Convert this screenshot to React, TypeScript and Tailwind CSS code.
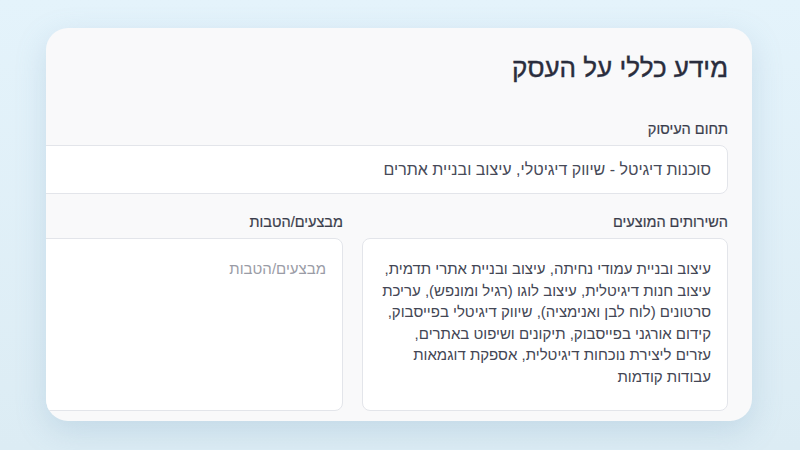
export default function App() {
  return (
    <div className="w-[800px] h-[450px] overflow-hidden bg-gradient-to-b from-[#e4f3fb] to-[#dcecf4] pt-[28px] pl-[46px] font-['Liberation_Sans',Arial,sans-serif]">
      <div
        dir="rtl"
        className="w-[706px] h-[393px] rounded-[22px] bg-[#f9f9fa] shadow-[0_10px_30px_rgba(120,160,190,0.25)] overflow-hidden pr-[24px] pt-[22px]"
      >
        <div className="w-[751px] shrink-0">
          <h1 className="text-[26px] leading-[36px] font-normal text-[#2a2d3d] [-webkit-text-stroke:0.4px_#2a2d3d]">מידע כללי על העסק</h1>

          <div className="mt-[33px]">
            <label className="block text-[14.5px] leading-[20px] font-medium text-[#3a3d4c] [-webkit-text-stroke:0.2px_#3a3d4c]">תחום העיסוק</label>
            <input
              readOnly
              value="סוכנות דיגיטל - שיווק דיגיטלי, עיצוב ובניית אתרים"
              className="mt-[6px] w-full h-[49px] rounded-[8px] border border-[#e3e5ea] bg-white px-[16px] text-[16px] text-[#474a58] outline-none"
            />
          </div>

          <div className="mt-[18px] grid grid-cols-2 gap-[19px]">
            <div>
              <label className="block text-[14.5px] leading-[20px] font-medium text-[#3a3d4c] [-webkit-text-stroke:0.2px_#3a3d4c]">השירותים המוצעים</label>
              <textarea
                readOnly
                value="עיצוב ובניית עמודי נחיתה, עיצוב ובניית אתרי תדמית, עיצוב חנות דיגיטלית, עיצוב לוגו (רגיל ומונפש), עריכת סרטונים (לוח לבן ואנימציה), שיווק דיגיטלי בפייסבוק, קידום אורגני בפייסבוק, תיקונים ושיפוט באתרים, עזרים ליצירת נוכחות דיגיטלית, אספקת דוגמאות עבודות קודמות"
                className="mt-[6px] block w-full h-[173px] resize-none rounded-[8px] border border-[#e3e5ea] bg-white px-[16px] pt-[19px] text-[15px] leading-[21.5px] text-[#434654] outline-none"
              />
            </div>
            <div>
              <label className="block text-[14.5px] leading-[20px] font-medium text-[#3a3d4c] [-webkit-text-stroke:0.2px_#3a3d4c]">מבצעים/הטבות</label>
              <textarea
                readOnly
                placeholder="מבצעים/הטבות"
                className="mt-[6px] block w-full h-[173px] resize-none rounded-[8px] border border-[#e3e5ea] bg-white px-[16px] pt-[19px] text-[15px] leading-[21.5px] text-[#434654] placeholder:text-[#9a9ca6] outline-none"
              />
            </div>
          </div>
        </div>
      </div>
    </div>
  );
}
